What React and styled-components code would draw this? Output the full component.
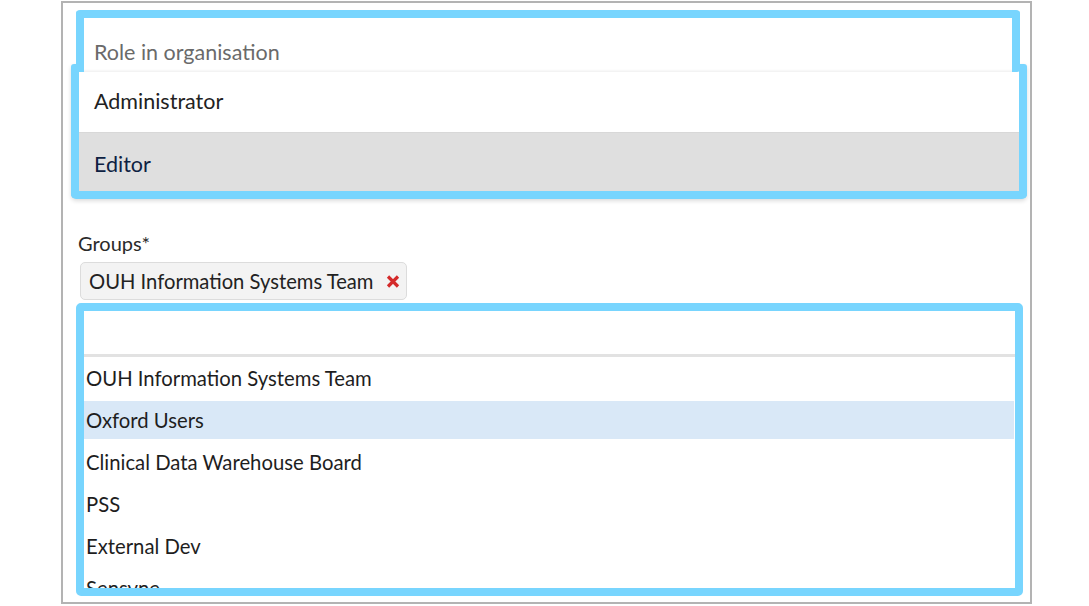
import React from "react";
import styled, { createGlobalStyle } from "styled-components";

const Global = createGlobalStyle`
  html, body { margin: 0; padding: 0; background: #ffffff; }
  body { font-family: Lato, "Open Sans", sans-serif; color: #222; }
  * { box-sizing: border-box; }
`;

const BLUE = "#78d5fe";

const Frame = styled.div`
  margin: 1px 0 0 61px;
  width: 971px;
  height: 603px;
  border: 2px solid #b3b3b3;
  padding: 7px 10px 0 13px;
  display: flex;
  flex-direction: column;
  overflow: hidden;
`;

const Field = styled.div`
  position: relative;
`;

const Control = styled.div`
  position: relative;
  z-index: 2;
  height: 62px;
  border: 8px solid ${BLUE};
  border-bottom: none;
  border-radius: 4px 4px 3px 3px;
  background: #fff;
  padding: 22px 0 0 10px;
  box-shadow: inset 0 -4px 3px -3px rgba(0, 0, 0, 0.08);
`;

const Placeholder = styled.div`
  font-size: 21.5px;
  line-height: 24px;
  color: #6a6a6a;
`;

const Menu = styled.div`
  position: absolute;
  z-index: 1;
  left: -5px;
  top: 54px;
  width: 956px;
  border: 8px solid ${BLUE};
  border-top: none;
  border-radius: 3px 3px 5px 5px;
  background: #fff;
  box-shadow: 0 2px 4px rgba(0, 0, 0, 0.14);
  display: flex;
  flex-direction: column;
`;

const MenuItem = styled.div`
  font-size: 21.5px;
  line-height: 24px;
  padding: ${(p) => (p.$first ? "25px 15px 19px" : "19px 15px 15px")};
  color: ${(p) => (p.$active ? "#0d2142" : "#222")};
  background: ${(p) => (p.$active ? "#dfdfdf" : "#fff")};
  border-bottom: ${(p) => (p.$first ? "1px solid #d8d8d8" : "none")};
`;

const Label = styled.div`
  margin: 159px 0 0 2px;
  font-size: 20px;
  line-height: 24px;
  color: #2a2a2a;
`;

const Chips = styled.div`
  display: flex;
  margin: 7px 0 0 4px;
`;

const Chip = styled.div`
  display: flex;
  align-items: center;
  gap: 13px;
  height: 38px;
  padding: 0 6px 0 8px;
  background: #f3f3f3;
  border: 1px solid #dcdcdc;
  border-radius: 5px;
  font-size: 20.2px;
  color: #222;
`;

const RemoveIcon = styled.svg`
  width: 14px;
  height: 13px;
  display: block;
`;

const ListBox = styled.div`
  margin-top: 3px;
  width: 947px;
  height: 293px;
  border: 8px solid ${BLUE};
  border-radius: 5px;
  background: #fff;
  display: flex;
  flex-direction: column;
  overflow: hidden;
`;

const SearchInput = styled.div`
  height: 46px;
  flex: none;
  border-bottom: 3px solid #e2e2e2;
`;

const Options = styled.div`
  display: flex;
  flex-direction: column;
  gap: 4px;
  padding-top: 2px;
`;

const Option = styled.div`
  flex: none;
  height: 38px;
  display: flex;
  align-items: center;
  padding-left: 2px;
  margin-right: 1px;
  font-size: 20.3px;
  color: #1e1e1e;
  background: ${(p) => (p.$hover ? "#d9e8f7" : "transparent")};
`;

const groups = [
  "OUH Information Systems Team",
  "Oxford Users",
  "Clinical Data Warehouse Board",
  "PSS",
  "External Dev",
  "Sensyne",
];

export default function App() {
  return (
    <>
      <Global />
      <Frame>
        <Field>
          <Control>
            <Placeholder>Role in organisation</Placeholder>
          </Control>
          <Menu>
            <MenuItem $first>Administrator</MenuItem>
            <MenuItem $active>Editor</MenuItem>
          </Menu>
        </Field>
        <Label>Groups*</Label>
        <Chips>
          <Chip>
            OUH Information Systems Team
            <RemoveIcon viewBox="0 0 14 13">
              <path d="M2 1.5 L12 11.5 M12 1.5 L2 11.5" stroke="#d42a2a" strokeWidth="3.2" strokeLinecap="butt" />
            </RemoveIcon>
          </Chip>
        </Chips>
        <ListBox>
          <SearchInput />
          <Options>
            {groups.map((g) => (
              <Option key={g} $hover={g === "Oxford Users"}>
                {g}
              </Option>
            ))}
          </Options>
        </ListBox>
      </Frame>
    </>
  );
}
